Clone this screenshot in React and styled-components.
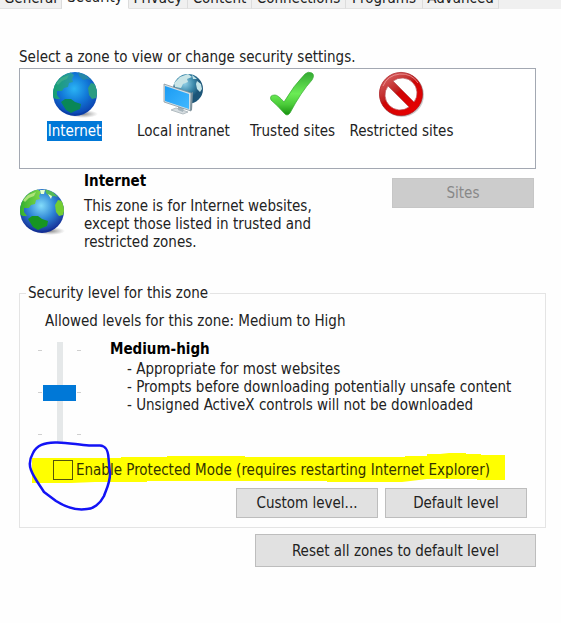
import React, { useState } from "react";
import styled, { createGlobalStyle } from "styled-components";

const GlobalStyle = createGlobalStyle`
  * { box-sizing: border-box; }
  body {
    margin: 0;
    background: #fefefe;
    color: #222;
    font-family: "DejaVu Sans Condensed", "Noto Sans", sans-serif;
    font-size: 15px;
    line-height: 18px;
  }
  button, input { font: inherit; color: inherit; margin: 0; }
`;

const Page = styled.div`
  overflow: hidden;
`;

const TabStrip = styled.div`
  display: flex;
  align-items: flex-end;
  height: 9px;
  overflow: hidden;
  background: #f0f0f0;
`;

const Tab = styled.button`
  flex: none;
  width: ${(p) => p.$width}px;
  height: 22px;
  padding: 0;
  border: 0;
  border-right: 1px solid #dcdcdc;
  border-bottom: 1px solid ${(p) => (p.$active ? "#fefefe" : "#e2e2e2")};
  background: ${(p) => (p.$active ? "#fefefe" : "#f0f0f0")};
  line-height: ${(p) => (p.$active ? 16 : 18)}px;
  padding-bottom: ${(p) => (p.$active ? 2 : 0)}px;
  text-align: center;
  white-space: nowrap;
`;

const Panel = styled.main`
  padding: 38px 15px 56px 19px;
`;

const Heading = styled.h1`
  margin: 0 0 1px;
  font-size: 15px;
  font-weight: 400;
  line-height: 20px;
`;

const ZoneList = styled.div`
  display: grid;
  grid-template-columns: repeat(4, 109px);
  align-items: start;
  height: 101px;
  margin-right: 10px;
  padding-top: 2px;
  border: 1px solid #a3a8b2;
  background: #fff;
`;

const ZoneItem = styled.button`
  display: flex;
  flex-direction: column;
  align-items: center;
  gap: 2px;
  padding: 0;
  border: 0;
  background: none;
  white-space: nowrap;
`;

const ZoneLabel = styled.span`
  padding: 0 1px;
  line-height: 20px;
  background: ${(p) => (p.$selected ? "#0078d7" : "transparent")};
  color: ${(p) => (p.$selected ? "#fff" : "inherit")};
`;

const ZoneDetails = styled.section`
  display: flex;
  align-items: flex-start;
  margin: 2px 12px 0 0;
`;

const DetailIcon = styled.div`
  flex: none;
  width: 65px;
  padding-top: 17px;
  line-height: 0;
`;

const DetailText = styled.div`
  flex: 1;
  min-width: 0;
`;

const Bold = styled.h2`
  margin: 0;
  color: #000;
  font-size: 15px;
  font-weight: 700;
  line-height: 20px;
`;

const Description = styled.p`
  max-width: 260px;
  margin: 6px 0 0;
`;

const PushButton = styled.button`
  flex: none;
  width: ${(p) => (p.$wide ? 281 : 142)}px;
  height: ${(p) => (p.$wide ? 33 : 30)}px;
  padding: 0;
  border: 1px solid #bdbdbd;
  background: #e1e1e1;
  &:disabled {
    border-color: #c6c6c6;
    background: #ccc;
    color: #888;
  }
`;

const SitesSlot = styled.div`
  display: flex;
  padding-top: 7px;
`;

const Group = styled.fieldset`
  min-width: 0;
  margin: 33px 0 0;
  padding: 10px 18px 9px 25px;
  border: 1px solid #e4e4e4;
`;

const Legend = styled.legend`
  margin-left: -19px;
  padding: 0 2px;
  line-height: 18px;
`;

const Allowed = styled.p`
  margin: 0;
`;

const LevelRow = styled.div`
  display: flex;
  align-items: flex-start;
  margin: 9px 0 0 -7px;
`;

const SliderBox = styled.div`
  display: flex;
  flex: none;
  width: 72px;
  padding-top: 3px;
`;

const Ticks = styled.div`
  display: flex;
  flex-direction: column;
  justify-content: space-between;
  width: 5px;
  height: 101px;
  padding: 8px 0;
`;

const Tick = styled.span`
  width: 4px;
  height: 1px;
  background: #cfcfcf;
`;

const LevelSlider = styled.input`
  appearance: none;
  writing-mode: vertical-lr;
  direction: rtl;
  width: 34px;
  height: 101px;
  background: transparent;
  &::-webkit-slider-runnable-track {
    width: 6px;
    height: 100%;
    background: #e5e8e9;
  }
  &::-webkit-slider-thumb {
    appearance: none;
    width: 33px;
    height: 16px;
    margin-left: -14px;
    border: 0;
    background: #0078d7;
  }
`;

const LevelList = styled.ul`
  margin: 0;
  padding: 1px 0 0 17px;
  list-style: none;
  white-space: nowrap;
`;

const ProtectedRow = styled.div`
  position: relative;
  display: flex;
  align-items: center;
  gap: 3px;
  height: 20px;
  margin: 17px 0 0 8px;
`;

const Marker = styled.svg`
  position: absolute;
  left: -26px;
  top: -20px;
  width: 490px;
  height: 74px;
  pointer-events: none;
`;

const CheckBox = styled.input`
  position: relative;
  flex: none;
  appearance: none;
  width: 20px;
  height: 20px;
  border: 1px solid #55550a;
  &:checked { background: #333; box-shadow: inset 0 0 0 4px #ff0; }
`;

const CheckLabel = styled.label`
  position: relative;
  color: #333300;
  white-space: nowrap;
`;

const ButtonRow = styled.div`
  display: flex;
  justify-content: flex-end;
  gap: 7px;
  margin-top: 8px;
`;

const ResetRow = styled.div`
  display: flex;
  justify-content: flex-end;
  margin: 6px 10px 0 0;
`;

function Globe({ id, vivid }) {
  return (
    <svg width="46" height="48" viewBox="0 0 46 48" aria-hidden="true">
      <defs>
        <radialGradient id={id} cx="48%" cy="38%" r="62%">
          <stop offset="0" stopColor={vivid ? "#83dcfa" : "#2bb4f4"} />
          <stop offset=".5" stopColor={vivid ? "#2f86d6" : "#1279d8"} />
          <stop offset="1" stopColor={vivid ? "#142b95" : "#0b3fae"} />
        </radialGradient>
        <linearGradient id={id + "l"} x1="0" y1="0" x2="1" y2="0">
          <stop offset="0" stopColor={vivid ? "#2fae2c" : "#15a06c"} />
          <stop offset="1" stopColor={vivid ? "#7fd64a" : "#2a98a8"} />
        </linearGradient>
        <radialGradient id={id + "s"}>
          <stop offset="0" stopColor="#555" stopOpacity=".7" />
          <stop offset="1" stopColor="#777" stopOpacity="0" />
        </radialGradient>
        <clipPath id={id + "c"}><circle cx="23" cy="23" r="22" /></clipPath>
      </defs>
      <ellipse cx="31" cy="43" rx="15" ry="4" fill={`url(#${id}s)`} />
      <circle cx="23" cy="23" r="22" fill={`url(#${id})`} />
      <g clipPath={`url(#${id}c)`}>
        <path d="M0 26 1 13 9 4 18 1 22 4 20 8 21 11 17 12 16 16 12 17 10 20 5 20 5 24 8 28 4 28Z" fill={`url(#${id}l)`} />
        <path d="M26 1 34 4 39 9 35 8 31 9 27 5Z" fill={vivid ? "#55ba58" : "#2587a8"} />
        <path d="M36 17 39 12 43 13 46 20 44 27 40 28 37 24Z" fill={vivid ? "#72cd32" : "#2b9c82"} />
        <path d="M9 31 13 28 19 28 23 31 29 33 28 38 23 40 19 42 14 39Z" fill={vivid ? "#179523" : "#098757"} />
        <path d="M9 7 17 4 15 8 10 10 6 14 4 12Z" fill={vivid ? "#c2ea88" : "#3fae8c"} opacity=".8" />
        {vivid && <path d="M21 2 26 2 25 6 22 6ZM29 6 33 8 32 11Z" fill="#e7ffd2" />}
      </g>
      <path d="M5 35Q19 49 38 38Q25 50 9 40" fill="#08267e" opacity=".25" />
    </svg>
  );
}

function Intranet() {
  return (
    <svg width="46" height="48" viewBox="0 0 46 48" aria-hidden="true">
      <defs>
        <radialGradient id="netGlobe" cx="40%" cy="32%">
          <stop offset="0" stopColor="#8fcfe6" />
          <stop offset=".6" stopColor="#3b88aa" />
          <stop offset="1" stopColor="#1c5578" />
        </radialGradient>
        <linearGradient id="netScreen" x1="0" y1="0" x2="1" y2="1">
          <stop offset="0" stopColor="#1a9bf3" />
          <stop offset="1" stopColor="#42b8ff" />
        </linearGradient>
      </defs>
      <circle cx="27" cy="18" r="15" fill="url(#netGlobe)" />
      <path d="M13 12 19 6 27 3 31 6 26 8 27 11 22 13 20 17 14 16Z" fill="#c9e5e7" />
      <path d="M36 10 40 13 41 18 39 21 36 18 35 13ZM31 4 36 8 32 8Z" fill="#c3e4e8" />
      <path d="M10 39 15 37 27 41 22 43Z" fill="#d6dde1" stroke="#b3bdc2" />
      <path d="m17 35 6 2-1 4-5-2Z" fill="#a4b3bb" />
      <path d="M3 13 30 22 30 40 3 31Z" fill="#d3e0e6" stroke="#7e8d95" strokeWidth=".7" />
      <path d="M4 15 28 23 28 38 4 30Z" fill="url(#netScreen)" />
      <path d="m30 22 2-1-1 18-2 1Z" fill="#7c919c" />
    </svg>
  );
}

function Check() {
  return (
    <svg width="46" height="48" viewBox="0 0 46 48" aria-hidden="true">
      <defs>
        <linearGradient id="checkGreen" x1="0" y1="0" x2="0" y2="1">
          <stop offset="0" stopColor="#35a934" />
          <stop offset=".5" stopColor="#6bec55" />
          <stop offset=".75" stopColor="#4ccc3a" />
          <stop offset="1" stopColor="#16910e" />
        </linearGradient>
      </defs>
      <path d="M1 29Q-1 24 5 24 8 24 14 31 24 14 35 3 38 0 42 2 45 4 42 9 31 21 20 42 17 46 14 42 8 35 1 29Z" fill="url(#checkGreen)" stroke="#38ab32" strokeWidth=".7" />
    </svg>
  );
}

function Restricted() {
  return (
    <svg width="46" height="48" viewBox="-1 -1 46 48" aria-hidden="true">
      <defs>
        <linearGradient id="banRed" x1="0" y1="0" x2=".7" y2="1">
          <stop offset="0" stopColor="#df7777" />
          <stop offset=".48" stopColor="#be2020" />
          <stop offset=".52" stopColor="#cd0505" />
          <stop offset="1" stopColor="#e80000" />
        </linearGradient>
      </defs>
      <circle cx="22" cy="23" r="22" fill="#ccc" />
      <circle cx="21" cy="22" r="21.600" fill="url(#banRed)" stroke="#a71218" strokeWidth=".7" />
      <path d="M13 9 34 30A15 15 0 0 0 13 9ZM8 14A15 15 0 0 0 29 35Z" fill="#fff" stroke="#b95358" strokeWidth=".7" />
      <path d="M3 14A20 20 0 0 1 38 11" fill="none" stroke="#f2a3a3" opacity=".7" />
    </svg>
  );
}

const tabs = [
  ["General", 62], ["Security", 67], ["Privacy", 59], ["Content", 64],
  ["Connections", 94], ["Programs", 77], ["Advanced", 76],
];

const zones = [
  ["Internet", <Globe id="zoneGlobe" />],
  ["Local intranet", <Intranet />],
  ["Trusted sites", <Check />],
  ["Restricted sites", <Restricted />],
];

const levelNotes = [
  "- Appropriate for most websites",
  "- Prompts before downloading potentially unsafe content",
  "- Unsigned ActiveX controls will not be downloaded",
];

function TickMarks() {
  return <Ticks aria-hidden="true"><Tick /><Tick /><Tick /></Ticks>;
}

export default function App() {
  const [zone, setZone] = useState("Internet");
  return (
    <Page>
      <GlobalStyle />
      <TabStrip role="tablist">
        {tabs.map(([name, width]) => (
          <Tab key={name} role="tab" aria-selected={name === "Security"} $active={name === "Security"} $width={width}>
            {name}
          </Tab>
        ))}
      </TabStrip>
      <Panel>
        <Heading>Select a zone to view or change security settings.</Heading>
        <ZoneList>
          {zones.map(([name, icon]) => (
            <ZoneItem key={name} aria-pressed={zone === name} onClick={() => setZone(name)}>
              {icon}
              <ZoneLabel $selected={zone === name}>{name}</ZoneLabel>
            </ZoneItem>
          ))}
        </ZoneList>
        <ZoneDetails>
          <DetailIcon><Globe id="detailGlobe" vivid /></DetailIcon>
          <DetailText>
            <Bold>Internet</Bold>
            <Description>
              This zone is for Internet websites, except those listed in trusted and restricted zones.
            </Description>
          </DetailText>
          <SitesSlot><PushButton disabled>Sites</PushButton></SitesSlot>
        </ZoneDetails>
        <Group>
          <Legend>Security level for this zone</Legend>
          <Allowed>Allowed levels for this zone: Medium to High</Allowed>
          <LevelRow>
            <SliderBox>
              <TickMarks />
              <LevelSlider type="range" min="0" max="2" defaultValue="1" aria-label="Security level" />
              <TickMarks />
            </SliderBox>
            <div>
              <Bold>Medium-high</Bold>
              <LevelList>
                {levelNotes.map((note) => <li key={note}>{note}</li>)}
              </LevelList>
            </div>
          </LevelRow>
          <ProtectedRow>
            <Marker viewBox="0 0 490 74" aria-hidden="true">
              <path d="M5 18H94V17H140V16H218V17H378V16H400V14H413L422 13H439V14H454V15H478V40H450V39H400L375 42H300V41H120V42H68L44 43H5Z" fill="#ff0" />
            </Marker>
            <CheckBox type="checkbox" id="protected" />
            <CheckLabel htmlFor="protected">Enable Protected Mode (requires restarting Internet Explorer)</CheckLabel>
            <Marker viewBox="0 0 490 74" aria-hidden="true">
              <path d="M4 30C2 25 2 20 6 13 10 5 17 3 28 2.500 40 2 51 5 62 5.500H73C79 6 81 10 81.500 18L83 34C83 43 79 50 77 56 73 64 66 69 60 69 48 71 37 66 29 61L17 52C12 44 7 38 4 30Z" fill="none" stroke="#1313f5" strokeWidth="2.500" strokeLinejoin="round" />
            </Marker>
          </ProtectedRow>
          <ButtonRow>
            <PushButton>Custom level...</PushButton>
            <PushButton>Default level</PushButton>
          </ButtonRow>
        </Group>
        <ResetRow><PushButton $wide>Reset all zones to default level</PushButton></ResetRow>
      </Panel>
    </Page>
  );
}
